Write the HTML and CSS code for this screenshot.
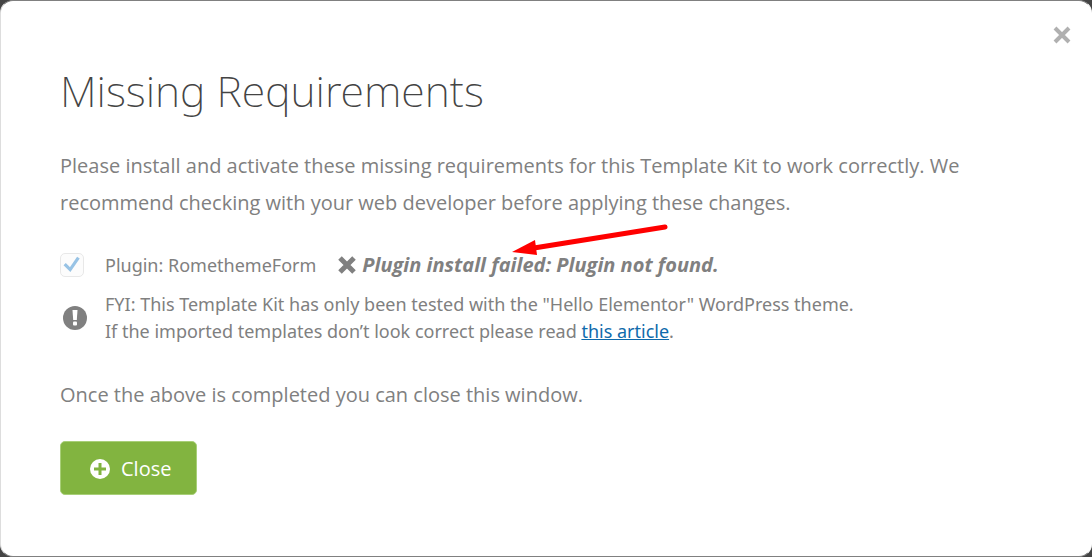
FILE: index.html
```html
<!DOCTYPE html>
<html lang="en">

<head>
  <meta charset="UTF-8">
  <meta name="viewport" content="width=device-width, initial-scale=1.0">
  <title>Missing Requirements</title>
  <link rel="stylesheet" href="styles.css">
</head>

<body>
  <div class="modal" role="dialog" aria-labelledby="modal-title">
    <button class="modal-dismiss" type="button" aria-label="Dismiss">
      <svg width="18" height="18" viewBox="0 0 18 18">
        <path d="M2 2L16 16M16 2L2 16" stroke="#b0b0b0" stroke-width="4" fill="none"/>
      </svg>
    </button>

    <h1 id="modal-title">Missing Requirements</h1>
    <p class="intro">Please install and activate these missing requirements for this Template Kit to work correctly. We recommend checking with your web developer before applying these changes.</p>

    <div class="requirement">
      <input type="checkbox" id="plugin-romethemeform" checked disabled>
      <label for="plugin-romethemeform">Plugin: RomethemeForm</label>
      <div class="error">
        <svg width="18" height="18" viewBox="0 0 18 18">
          <path d="M2 2L16 16M16 2L2 16" stroke="#808080" stroke-width="5" fill="none"/>
        </svg>
        <strong>Plugin install failed: Plugin not found.</strong>
        <svg class="arrow" width="156" height="34" viewBox="0 0 156 34">
          <path d="M22 25L153 4" stroke="#ff0000" stroke-width="5" stroke-linecap="round"/>
          <path d="M0 29L23 17L25 32Z" fill="#ff0000"/>
        </svg>
      </div>
    </div>

    <div class="notice">
      <svg width="24" height="24" viewBox="0 0 24 24">
        <circle cx="12" cy="12" r="12" fill="#808080"/>
        <path d="M9.5 4H14.5L13.8 14H10.2Z" fill="#fff"/>
        <rect x="10" y="15.5" width="4" height="4" rx="1" fill="#fff"/>
      </svg>
      <p>FYI: This Template Kit has only been tested with the "Hello Elementor" WordPress theme.<br>
        If the imported templates don’t look correct please read <a href="#">this article</a>.</p>
    </div>

    <p class="outro">Once the above is completed you can close this window.</p>

    <button class="btn-close" type="button">
      <svg width="20" height="20" viewBox="0 0 20 20">
        <circle cx="10" cy="10" r="10" fill="#fff"/>
        <path d="M10 4V16M4 10H16" stroke="#82b440" stroke-width="3"/>
      </svg>
      Close
    </button>
  </div>
</body>

</html>
```
FILE: styles.css
```css
* {
  box-sizing: border-box;
}

body {
  margin: 0;
  background-color: #444;
  color: #808080;
  font-family: "Segoe UI", "Open Sans", sans-serif;
  font-size: 20px;
}

.modal {
  position: relative;
  min-height: 100vh;
  padding: 59px;
  background-color: #fff;
  border: 1px solid #808080;
  border-right-color: #fff;
  border-left-color: #ddd;
  border-radius: 13px;
}

.modal-dismiss {
  position: absolute;
  top: 25px;
  right: 20px;
  padding: 0;
  border: none;
  background: none;
  cursor: pointer;
}

svg {
  display: block;
  flex: none;
}

h1 {
  margin: 0;
  color: #444;
  font-family: "Segoe UI", "Noto Sans", sans-serif;
  font-size: 43px;
  font-weight: 200;
  line-height: 62px;
}

p {
  margin: 0;
}

.intro {
  margin-top: 25px;
  line-height: 37px;
}

.requirement {
  display: flex;
  align-items: center;
  margin-top: 30px;
  line-height: 28px;
}

.requirement label,
.notice {
  font-family: "Segoe UI", "Noto Sans", sans-serif;
  font-size: 18px;
}

.requirement input {
  appearance: none;
  width: 24px;
  height: 24px;
  margin: 0 21px 0 0;
  border: 1px solid #e8e8e8;
  border-radius: 5px;
  background: #fcfcfc url('data:image/svg+xml,<svg xmlns="http://www.w3.org/2000/svg" viewBox="0 0 24 24"><path d="M4 11L10 17L19 4" fill="none" stroke="%2398c3e5" stroke-width="3.5"/></svg>') center no-repeat;
}

.error {
  position: relative;
  display: flex;
  align-items: center;
  gap: 6px;
  margin-left: 22px;
  font-style: italic;
}

.arrow {
  position: absolute;
  top: -28px;
  left: 174px;
}

.notice {
  display: flex;
  align-items: center;
  gap: 18px;
  margin-top: 12px;
  padding-left: 3px;
  line-height: 27px;
}

.notice a {
  color: #0f6aab;
}

.outro {
  margin-top: 31px;
  line-height: 37px;
}

.btn-close {
  display: flex;
  align-items: center;
  gap: 11px;
  height: 54px;
  margin-top: 28px;
  padding: 1px 25px 0 29px;
  border: 1px solid #a8cf78;
  border-radius: 5px;
  background-color: #82b440;
  color: #fff;
  font-family: inherit;
  font-size: 20px;
  cursor: pointer;
}
```
